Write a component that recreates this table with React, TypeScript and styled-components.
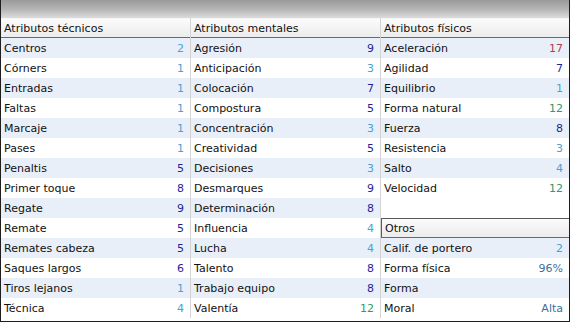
import React from "react";
import styled, { createGlobalStyle } from "styled-components";

type Attr = { name: string; value?: number | string };

const tecnicos: Attr[] = [
  { name: "Centros", value: 2 },
  { name: "Córners", value: 1 },
  { name: "Entradas", value: 1 },
  { name: "Faltas", value: 1 },
  { name: "Marcaje", value: 1 },
  { name: "Pases", value: 1 },
  { name: "Penaltis", value: 5 },
  { name: "Primer toque", value: 8 },
  { name: "Regate", value: 9 },
  { name: "Remate", value: 5 },
  { name: "Remates cabeza", value: 5 },
  { name: "Saques largos", value: 6 },
  { name: "Tiros lejanos", value: 1 },
  { name: "Técnica", value: 4 },
];

const mentales: Attr[] = [
  { name: "Agresión", value: 9 },
  { name: "Anticipación", value: 3 },
  { name: "Colocación", value: 7 },
  { name: "Compostura", value: 5 },
  { name: "Concentración", value: 3 },
  { name: "Creatividad", value: 5 },
  { name: "Decisiones", value: 3 },
  { name: "Desmarques", value: 9 },
  { name: "Determinación", value: 8 },
  { name: "Influencia", value: 4 },
  { name: "Lucha", value: 4 },
  { name: "Talento", value: 8 },
  { name: "Trabajo equipo", value: 8 },
  { name: "Valentía", value: 12 },
];

const fisicos: Attr[] = [
  { name: "Aceleración", value: 17 },
  { name: "Agilidad", value: 7 },
  { name: "Equilibrio", value: 1 },
  { name: "Forma natural", value: 12 },
  { name: "Fuerza", value: 8 },
  { name: "Resistencia", value: 3 },
  { name: "Salto", value: 4 },
  { name: "Velocidad", value: 12 },
];

const otros: Attr[] = [
  { name: "Calif. de portero", value: 2 },
  { name: "Forma física", value: "96%" },
  { name: "Forma" },
  { name: "Moral", value: "Alta" },
];

const valueColor = (v?: number | string) => {
  if (typeof v !== "number") return "#3a6f9e";
  if (v <= 4) return "#4a9fd4";
  if (v <= 10) return "#1f1f96";
  if (v <= 15) return "#2f9a6a";
  return "#b33a55";
};

const GlobalStyle = createGlobalStyle`
  html, body {
    margin: 0;
    padding: 0;
    background: #ffffff;
  }
  body {
    font-family: "DejaVu Sans", Verdana, sans-serif;
  }
`;

const Panel = styled.div`
  width: 570px;
  height: 322px;
  box-sizing: border-box;
  border: 1px solid #1e1e1e;
  border-top: none;
  display: flex;
  flex-direction: column;
  background: #fff;
`;

const TopBar = styled.div`
  height: 18px;
  background: linear-gradient(to bottom, #9a9a9a, #b4b4b4 50%, #dcdcdc);
`;

const Columns = styled.div`
  display: grid;
  grid-template-columns: 190px 190px 1fr;
`;

const Column = styled.div<{ $last?: boolean }>`
  display: flex;
  flex-direction: column;
  border-right: ${({ $last }) => ($last ? "none" : "1px solid #d4d4d4")};
`;

const Header = styled.div<{ $boxed?: boolean }>`
  height: 20px;
  box-sizing: border-box;
  display: flex;
  align-items: center;
  padding-left: 3px;
  font-size: 11px;
  color: #111;
  background: linear-gradient(to bottom, #fbfbfb, #ececec);
  border-top: 1px solid ${({ $boxed }) => ($boxed ? "#5a5a5a" : "#f4f4f4")};
  border-left: ${({ $boxed }) => ($boxed ? "1px solid #5a5a5a" : "none")};
  border-bottom: 1px solid #6a6a6a;
`;

const Row = styled.div<{ $odd: boolean }>`
  height: 20px;
  display: flex;
  align-items: center;
  justify-content: space-between;
  padding: 0 6px 0 3px;
  font-size: 11px;
  color: #111;
  background: ${({ $odd }) => ($odd ? "#e9eff9" : "#ffffff")};
`;

const Value = styled.span<{ $color: string }>`
  color: ${({ $color }) => $color};
`;

const Rows = ({ items, start = 0 }: { items: Attr[]; start?: number }) => (
  <>
    {items.map((a, i) => (
      <Row key={a.name} $odd={(i + start) % 2 === 0}>
        <span>{a.name}</span>
        {a.value !== undefined && (
          <Value $color={valueColor(a.value)}>{a.value}</Value>
        )}
      </Row>
    ))}
  </>
);

export default function App() {
  return (
    <>
      <GlobalStyle />
      <Panel>
        <TopBar />
        <Columns>
          <Column>
            <Header>Atributos técnicos</Header>
            <Rows items={tecnicos} />
          </Column>
          <Column>
            <Header>Atributos mentales</Header>
            <Rows items={mentales} />
          </Column>
          <Column $last>
            <Header>Atributos físicos</Header>
            <Rows items={fisicos} />
            <Row $odd={false} />
            <Header $boxed>Otros</Header>
            <Rows items={otros} />
          </Column>
        </Columns>
      </Panel>
    </>
  );
}
